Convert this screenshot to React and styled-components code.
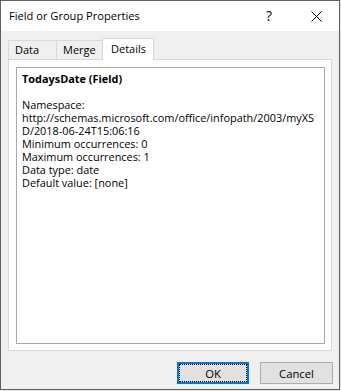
import React from "react";
import styled, { createGlobalStyle, css } from "styled-components";

const Global = createGlobalStyle`
  html, body { margin: 0; padding: 0; background: #e6e6e6; }
  body { font-family: "Open Sans", "Noto Sans", sans-serif; font-size: 11px; color: #000; }
  * { box-sizing: border-box; }
`;

const Frame = styled.div`
  width: 340px;
  height: 390px;
  border: 1px solid #5a6262;
  display: flex;
  flex-direction: column;
  background: #f0f0f0;
`;

const TitleBar = styled.div`
  height: 30px;
  background: #fff;
  display: flex;
  align-items: center;
  padding-left: 8px;
`;

const Title = styled.div`
  flex: 1;
  font-size: 11.1px;
  line-height: 16px;
  margin-top: -1px;
`;

const Help = styled.div`
  width: 46px;
  text-align: center;
  font-size: 14px;
  line-height: 16px;
  margin-right: 1px;
`;

const Close = styled.div`
  width: 46px;
  height: 30px;
  display: flex;
  align-items: center;
  justify-content: center;
`;

const Body = styled.div`
  flex: 1;
  display: flex;
  flex-direction: column;
  padding: 7px 7px 0 7px;
`;

const TabStrip = styled.div`
  height: 21px;
  display: flex;
  align-items: flex-end;
`;

const Tab = styled.div`
  height: 19px;
  width: ${(p) => p.$w}px;
  border: 1px solid #d9d9d9;
  border-bottom: none;
  margin-left: -1px;
  padding-left: 6px;
  line-height: 18px;
  background: #f0f0f0;
  &:first-child { margin-left: 0; }
  ${(p) =>
    p.$active &&
    css`
      height: 22px;
      margin-left: -2px;
      margin-bottom: -1px;
      padding-left: 8px;
      line-height: 19px;
      background: #fff;
      position: relative;
      z-index: 1;
    `}
`;

const Panel = styled.div`
  height: 292px;
  background: #fff;
  border: 1px solid #d9d9d9;
  padding: 7px 6px 6px 7px;
  display: flex;
`;

const InfoBox = styled.div`
  flex: 1;
  border: 1px solid #a9a9a9;
  padding: 4px 5px;
  font-size: 10.9px;
`;

const Line = styled.div`
  height: 13px;
  line-height: 13px;
  white-space: nowrap;
  font-weight: ${(p) => (p.$bold ? 700 : 400)};
`;

const ButtonRow = styled.div`
  display: flex;
  justify-content: flex-end;
  gap: 11px;
  margin-top: 11px;
  margin-right: -1px;
`;

const Button = styled.div`
  width: ${(p) => p.$w}px;
  height: 22px;
  background: #e1e1e1;
  border: 1px solid #adadad;
  display: flex;
  align-items: center;
  justify-content: center;
  font-size: 11.3px;
  ${(p) =>
    p.$default &&
    css`
      border: 2px solid #0078d7;
      outline: 1px dotted #000;
      outline-offset: -3px;
    `}
`;

const lines = [
  { t: "TodaysDate (Field)", bold: true },
  { t: "\u00a0" },
  { t: "Namespace:" },
  { t: "http://schemas.microsoft.com/office/infopath/2003/myXS" },
  { t: "D/2018-06-24T15:06:16" },
  { t: "Minimum occurrences: 0" },
  { t: "Maximum occurrences: 1" },
  { t: "Data type: date" },
  { t: "Default value: [none]" },
];

export default function App() {
  return (
    <>
      <Global />
      <Frame>
        <TitleBar>
          <Title>Field or Group Properties</Title>
          <Help>?</Help>
          <Close>
            <svg width="11" height="11" viewBox="0 0 11 11">
              <path d="M0.5 0.5 L10.5 10.5 M10.5 0.5 L0.5 10.5" stroke="#000" strokeWidth="1" fill="none" />
            </svg>
          </Close>
        </TitleBar>
        <Body>
          <TabStrip>
            <Tab $w={49}>Data</Tab>
            <Tab $w={48}>Merge</Tab>
            <Tab $w={52} $active>Details</Tab>
          </TabStrip>
          <Panel>
            <InfoBox>
              {lines.map((l, i) => (
                <Line key={i} $bold={l.bold}>{l.t}</Line>
              ))}
            </InfoBox>
          </Panel>
          <ButtonRow>
            <Button $w={72} $default>OK</Button>
            <Button $w={73}>Cancel</Button>
          </ButtonRow>
        </Body>
      </Frame>
    </>
  );
}
